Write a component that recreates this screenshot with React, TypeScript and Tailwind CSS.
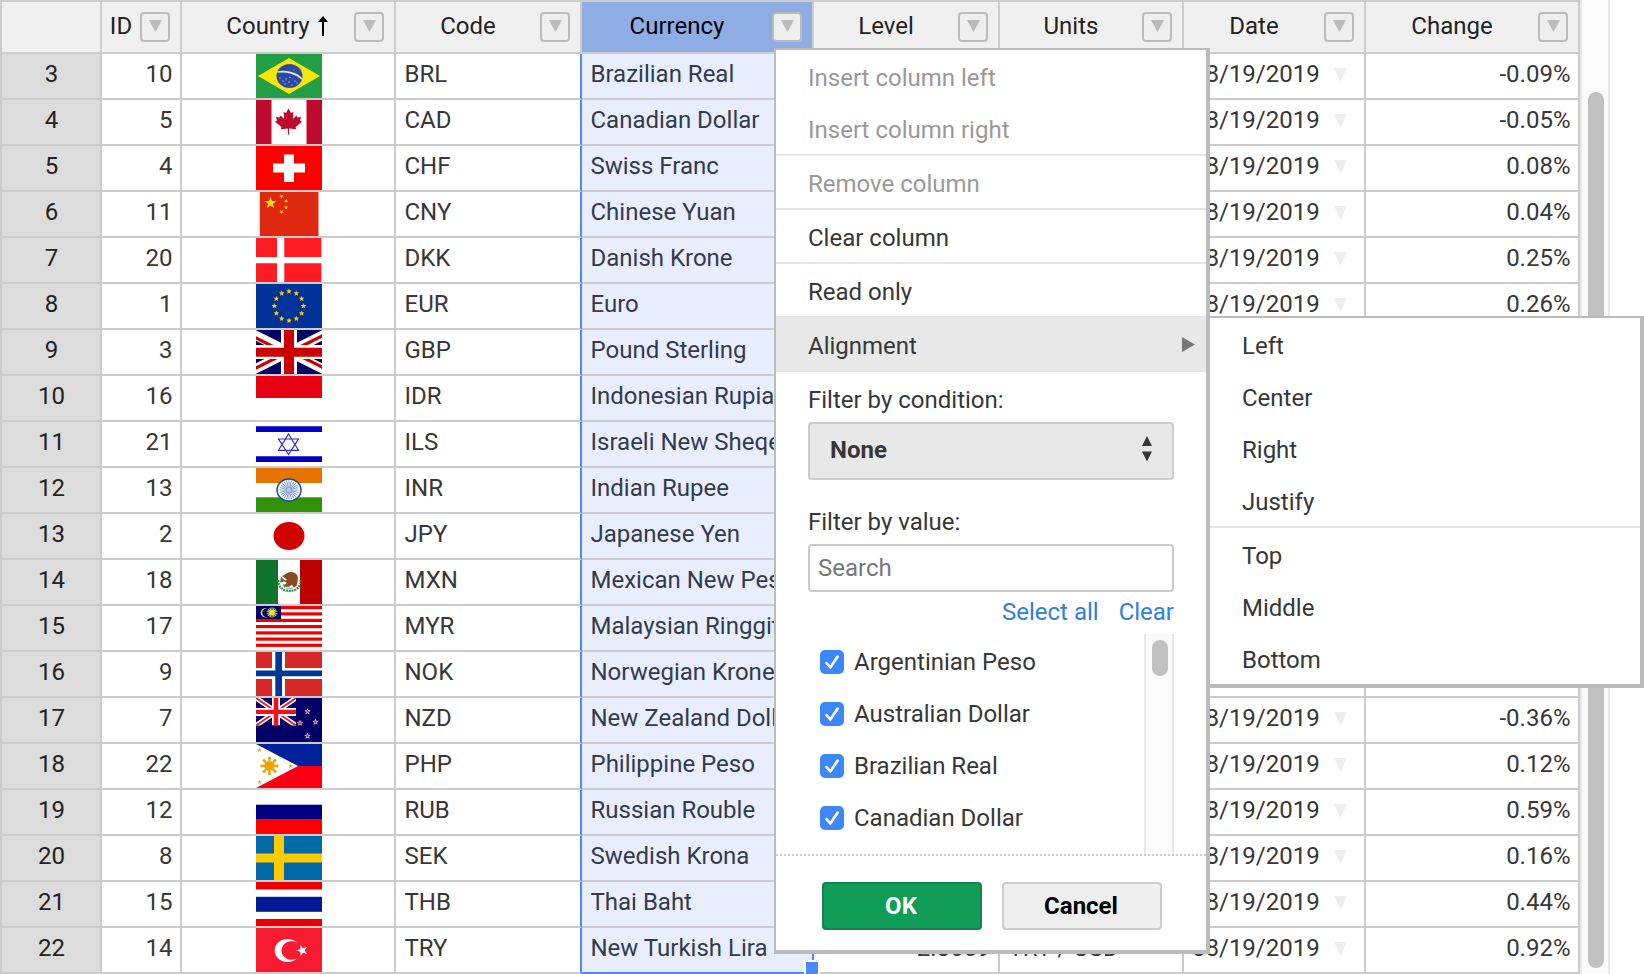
import React from "react";

type Row = { id: number; code: string; name: string; date?: string; change?: string; level?: string; units?: string };

const DATE = "08/19/2019";

const rows: Row[] = [
  { id: 10, code: "BRL", name: "Brazilian Real", date: DATE, change: "-0.09%" },
  { id: 5, code: "CAD", name: "Canadian Dollar", date: DATE, change: "-0.05%" },
  { id: 4, code: "CHF", name: "Swiss Franc", date: DATE, change: "0.08%" },
  { id: 11, code: "CNY", name: "Chinese Yuan", date: DATE, change: "0.04%" },
  { id: 20, code: "DKK", name: "Danish Krone", date: DATE, change: "0.25%" },
  { id: 1, code: "EUR", name: "Euro", date: DATE, change: "0.26%" },
  { id: 3, code: "GBP", name: "Pound Sterling" },
  { id: 16, code: "IDR", name: "Indonesian Rupiah" },
  { id: 21, code: "ILS", name: "Israeli New Sheqel" },
  { id: 13, code: "INR", name: "Indian Rupee" },
  { id: 2, code: "JPY", name: "Japanese Yen" },
  { id: 18, code: "MXN", name: "Mexican New Peso" },
  { id: 17, code: "MYR", name: "Malaysian Ringgit" },
  { id: 9, code: "NOK", name: "Norwegian Krone" },
  { id: 7, code: "NZD", name: "New Zealand Dollar", date: DATE, change: "-0.36%" },
  { id: 22, code: "PHP", name: "Philippine Peso", date: DATE, change: "0.12%" },
  { id: 12, code: "RUB", name: "Russian Rouble", date: DATE, change: "0.59%" },
  { id: 8, code: "SEK", name: "Swedish Krona", date: DATE, change: "0.16%" },
  { id: 15, code: "THB", name: "Thai Baht", date: DATE, change: "0.44%" },
  { id: 14, code: "TRY", name: "New Turkish Lira", date: DATE, change: "0.92%", level: "2.8659", units: "TRY / USD" },
];

const GRID = "grid grid-cols-[102px_80px_214px_186px_232px_186px_184px_182px_214px]";

function star(cx: number, cy: number, r: number, rot = -90, inner = 0.4): string {
  const pts: string[] = [];
  for (let i = 0; i < 10; i++) {
    const a = ((rot + i * 36) * Math.PI) / 180;
    const q = i % 2 ? r * inner : r;
    pts.push(`${(cx + q * Math.cos(a)).toFixed(2)},${(cy + q * Math.sin(a)).toFixed(2)}`);
  }
  return pts.join(" ");
}

function FlagArt({ code }: { code: string }) {
  switch (code) {
    case "BRL":
      return (
        <>
          <rect width="66" height="44" fill="#229e45" />
          <path d="M33 4 64 22 33 40 2 22Z" fill="#f8e509" />
          <ellipse cx="33.5" cy="22" rx="13" ry="12" fill="#2b49a3" />
          <path d="M21.5 18C30 16.500 40 19 46 25" fill="none" stroke="#dff0d8" strokeWidth="1.7" />
          <g fill="#a9b6dd">
            <circle cx="24" cy="24" r=".7" /><circle cx="27" cy="27" r=".7" /><circle cx="30" cy="25" r=".7" />
            <circle cx="33" cy="28" r=".8" /><circle cx="36" cy="31" r=".7" /><circle cx="39" cy="27" r=".7" />
            <circle cx="41" cy="29" r=".7" /><circle cx="34" cy="23.500" r=".7" /><circle cx="29" cy="30" r=".7" />
            <circle cx="38" cy="16" r=".5" />
          </g>
        </>
      );
    case "CAD":
      return (
        <>
          <rect width="66" height="44" fill="#fff" />
          <rect width="15.500" height="44" fill="#bf0a30" />
          <rect x="50.500" width="15.500" height="44" fill="#bf0a30" />
          <path
            d="M32.500 8.500 35 13 37.500 12 36.800 19 40.500 15.500 41.500 17.500 45 17 44 20.500 46 21.800 39.500 27 40.200 29.200 33 28.500 33.200 34.500H31.800L32 28.500 24.800 29.200 25.500 27 19 21.800 21 20.500 20 17 23.500 17.500 24.500 15.500 28.200 19 27.500 12 30 13Z"
            fill="#bf0a30"
          />
        </>
      );
    case "CHF":
      return (
        <>
          <rect width="66" height="44" fill="#fe0000" />
          <path d="M28 8.500h10v9h11v9H38v9.500H28v-9.500H17v-9h11Z" fill="#fff" />
        </>
      );
    case "CNY":
      return (
        <>
          <rect x="3.800" width="58.700" height="44" fill="#de2910" />
          <g fill="#ffde00">
            <polygon points={star(14.5, 11, 6.3)} />
            <polygon points={star(25.5, 4.3, 2.2, 30)} />
            <polygon points={star(30, 9, 2.2, 10)} />
            <polygon points={star(30, 15.5, 2.2, -90)} />
            <polygon points={star(25.5, 19.8, 2.2, 20)} />
          </g>
        </>
      );
    case "DKK":
      return (
        <>
          <rect width="65.300" height="44" fill="#ff1b22" />
          <path d="M21 0h7.300v44H21ZM0 19h66v6.300H0Z" fill="#fff" />
        </>
      );
    case "EUR":
      return (
        <>
          <rect width="66" height="44" fill="#039" />
          {Array.from({ length: 12 }, (_, i) => {
            const a = (i * Math.PI) / 6;
            return <polygon key={i} points={star(33 + 14.6 * Math.sin(a), 22 - 14.6 * Math.cos(a), 2.9, -90, 0.45)} fill="#fc0" />;
          })}
        </>
      );
    case "GBP":
      return (
        <>
          <rect width="66" height="44" fill="#006" />
          <path d="M-11 0 77 44M77 0-11 44" stroke="#fff" strokeWidth="9.500" />
          <path d="M-2 7 18 17M68 5 42 18M-2 39 26 25M68 38 40 24" stroke="#c00" strokeWidth="3.200" />
          <path d="M25 0h16v44H25ZM0 15h66v14H0Z" fill="#fff" />
          <path d="M28 0h10v44H28ZM0 17.700h66v9H0Z" fill="#c00" />
        </>
      );
    case "IDR":
      return (
        <>
          <rect width="66" height="44" fill="#fff" />
          <rect width="66" height="22" fill="#e70011" />
        </>
      );
    case "ILS":
      return (
        <>
          <rect width="66" height="44" fill="#fff" />
          <path d="M0 4.300h66V10H0ZM0 34.300h66V40H0Z" fill="#0000c8" />
          <path d="M32.500 12 42.500 28.300h-20ZM32.500 32.500 42.500 17h-20Z" fill="none" stroke="#2a2acc" strokeWidth="1.200" />
        </>
      );
    case "INR":
      return (
        <>
          <rect width="66" height="44" fill="#fff" />
          <rect width="66" height="15" fill="#e87400" />
          <rect y="29.300" width="66" height="14.700" fill="#319208" />
          <ellipse cx="33" cy="22" rx="12" ry="11" fill="#eef2fa" stroke="#1d4a9f" strokeWidth="1.500" />
          {Array.from({ length: 12 }, (_, i) => (
            <path key={i} d="M33 12.500V31.500" stroke="#7d9ad0" strokeWidth=".8" transform={`rotate(${i * 15} 33 22)`} />
          ))}
          <circle cx="33" cy="22" r="2" fill="#b7c8e6" />
        </>
      );
    case "JPY":
      return (
        <>
          <rect width="66" height="44" fill="#fff" />
          <ellipse cx="33" cy="22" rx="15.500" ry="14" fill="#d30000" />
        </>
      );
    case "MXN":
      return (
        <>
          <rect width="66" height="44" fill="#fff" />
          <rect width="22" height="44" fill="#0f7329" />
          <rect x="44" width="22" height="44" fill="#bd0000" />
          <path d="M22.500 20C22 27 27 31 33.500 31S45 27 44.500 20" fill="none" stroke="#3c8a4c" strokeWidth="2.200" strokeDasharray="2 .8" />
          <path d="M26 16c3-1 4-3 7-3.800 5-.7 9 2 9 6l-1 7-3 2.500-2-3-3 2-5-1 3-3-3-1 3-2Z" fill="#8b4a22" />
          <path d="M25 17l5 4-6 1.500ZM27 24l6 2-5 1.500Z" fill="#4c7b3c" />
          <path d="M29 27.500h9l-2 2h-5Z" fill="#7fc3d0" />
        </>
      );
    case "MYR":
      return (
        <>
          <rect width="66" height="44" fill="#fff" />
          {[0, 6.3, 12.8, 19, 25.3, 31.5, 37.7].map((y) => (
            <rect key={y} y={y} width="66" height="3.200" fill="#ed0000" />
          ))}
          <rect width="25" height="13" fill="#006" />
          <path d="M12 2.500a5 4.800 0 1 0 0 8.500 4.600 4.400 0 1 1 0-8.500Z" fill="#e8e23a" />
          <g stroke="#e8e23a" strokeWidth="1">
            {Array.from({ length: 7 }, (_, i) => (
              <path key={i} d="M16 1.300V11.700" transform={`rotate(${i * 25.7} 16 6.500)`} />
            ))}
          </g>
          <circle cx="16" cy="6.500" r="2.600" fill="#e8e23a" />
        </>
      );
    case "NOK":
      return (
        <>
          <rect width="66" height="44" fill="#d72828" />
          <path d="M16 0h13v44H16ZM0 16h66v11H0Z" fill="#fff" />
          <path d="M19.300 0H26v44h-6.700ZM0 18.500h66v5.800H0Z" fill="#003897" />
        </>
      );
    case "NZD":
      return (
        <>
          <rect width="66" height="44" fill="#006" />
          <svg width="40" height="27.500" viewBox="0 0 40 27.500">
            <path d="M0 0 40 27.500M40 0 0 27.500" stroke="#fff" strokeWidth="5" />
            <path d="M0 0 40 27.500M40 0 0 27.500" stroke="#f01020" strokeWidth="1.800" />
            <path d="M16 0h8v27.500h-8ZM0 10h40v8H0Z" fill="#fff" />
            <path d="M17.700 0h4.600v27.500h-4.600ZM0 11.700h40v4.300H0Z" fill="#f01020" />
          </svg>
          {[[51.5, 13.5], [44, 25], [59.5, 24], [51.5, 38]].map(([x, y]) => (
            <g key={`${x}-${y}`}>
              <polygon points={star(x, y, 3.3, -90, 0.45)} fill="#fff" />
              <polygon points={star(x, y, 2.1, -90, 0.5)} fill="#e01838" />
            </g>
          ))}
        </>
      );
    case "PHP":
      return (
        <>
          <rect width="66" height="22" fill="#00209c" />
          <rect y="22" width="66" height="22" fill="#fb0013" />
          <path d="M0 0 42 22 0 44Z" fill="#fff" />
          <g fill="#eda300">
            <ellipse cx="13.500" cy="22" rx="5.300" ry="4.800" />
            {Array.from({ length: 8 }, (_, i) => (
              <path key={i} d="M12.700 18 12 13.300 13.500 12.800 15 13.300 14.300 18Z" transform={`rotate(${i * 45} 13.500 22)`} />
            ))}
            <polygon points={star(3.5, 6, 2.5)} />
            <polygon points={star(3.5, 38, 2.5)} />
            <polygon points={star(34.5, 22, 2.5)} />
          </g>
        </>
      );
    case "RUB":
      return (
        <>
          <rect width="66" height="44" fill="#fff" />
          <rect y="14.700" width="66" height="14.700" fill="#000080" />
          <rect y="29" width="66" height="15" fill="#fe0000" />
        </>
      );
    case "SEK":
      return (
        <>
          <rect width="66" height="44" fill="#0069a7" />
          <path d="M18 0h10v44H18ZM0 17.600h66v9H0Z" fill="#fecb00" />
        </>
      );
    case "THB":
      return (
        <>
          <rect width="66" height="44" fill="#fff" />
          <path d="M0 0h66v7.500H0ZM0 37h66v7H0Z" fill="#ea0000" />
          <rect y="14.800" width="66" height="15" fill="#001a93" />
        </>
      );
    default:
      return (
        <>
          <rect width="66" height="44" fill="#f71a31" />
          <path d="M41 14.500a13 11.500 0 1 0 0 16 10.300 9.300 0 1 1 0-16Z" fill="#fff" />
          <polygon points={star(46.3, 22.5, 6, 180, 0.38)} fill="#fff" />
        </>
      );
  }
}

function Flag({ code }: { code: string }) {
  return (
    <svg width="66" height="44" viewBox="0 0 66 44" className="ml-[74px] block overflow-hidden">
      <FlagArt code={code} />
    </svg>
  );
}

function FilterButton() {
  return (
    <span className="mr-2.5 flex h-[30px] w-[30px] shrink-0 justify-center rounded-[4px] border-2 border-[#bbb] bg-[#eee] pt-1.5">
      <svg width="13" height="12" viewBox="0 0 13 12" className="ml-px">
        <path d="M0 0h13L6.500 12Z" fill="#bbb" />
      </svg>
    </span>
  );
}

function Head({ title, sorted, selected }: { title: string; sorted?: boolean; selected?: boolean }) {
  return (
    <div className={`flex items-center border-r-2 border-b-2 border-[#ccc] ${selected ? "bg-[#8eade5] text-black" : "bg-[#f0f0f0] text-[#222]"}`}>
      <span className="flex flex-1 justify-center pb-0.5 leading-[30px]">
        <span className="relative">
          {title}
          {sorted && (
            <svg width="10" height="20" viewBox="0 0 10 20" className="absolute top-[5px] left-[92px]">
              <path d="M5 0 10 6H6V20H4V6H0Z" fill="#000" />
            </svg>
          )}
        </span>
      </span>
      <FilterButton />
    </div>
  );
}

const CELL = "border-r-2 border-b-2 border-[#ccc] leading-[40px] whitespace-nowrap overflow-hidden";

function SheetRow({ row, index }: { row: Row; index: number }) {
  const last = index === rows.length - 1;
  return (
    <div className={`${GRID} h-[46px]`}>
      <div className={`${CELL} border-l-2 bg-[#dcdcdc] pl-px text-center text-[#222]`}>{index + 3}</div>
      <div className={`${CELL} pr-[7.5px] text-right`}>{row.id}</div>
      <div className={CELL}>
        <Flag code={row.code} />
      </div>
      <div className={`${CELL} border-r-[#4b89ff] pl-[8.5px]`}>{row.code}</div>
      <div className={`${CELL} border-r-[#4b89ff] bg-[#e8eefe] pl-[8.5px] text-[#333a4d] ${last ? "border-b-[#4b89ff]" : ""}`}>{row.name}</div>
      <div className={`${CELL} pr-[7.5px] text-right`}>{row.level}</div>
      <div className={`${CELL} pl-[8.5px]`}>{row.units}</div>
      <div className={`${CELL} flex justify-between pr-[17px] pl-2`}>
        {row.date && (
          <>
            {row.date}
            <svg width="13" height="14" viewBox="0 0 13 14" className="mt-[14px]">
              <path d="M0 0h13L6.500 14Z" fill="#eee" />
            </svg>
          </>
        )}
      </div>
      <div className={`${CELL} pr-[7.5px] text-right`}>{row.change}</div>
    </div>
  );
}

function MenuItem({ label, disabled }: { label: string; disabled?: boolean }) {
  return <div className={`h-[52px] px-8 leading-[56px] ${disabled ? "text-[#999]" : ""}`}>{label}</div>;
}

const Separator = () => <div className="h-0.5 bg-[#e6e6e6]" />;

function CheckItem({ label }: { label: string }) {
  return (
    <div className="flex h-[52px] items-center gap-2.5">
      <svg width="24" height="24" viewBox="0 0 24 24">
        <rect width="24" height="24" rx="5" fill="#3b88fd" />
        <path d="M6.500 13.200 10.300 17.500 17.700 6.500" fill="none" stroke="#fff" strokeWidth="2.600" strokeLinecap="round" strokeLinejoin="round" />
      </svg>
      <span className="leading-[52px]">{label}</span>
    </div>
  );
}

function ColumnMenu() {
  return (
    <div className="absolute top-12 left-[774px] h-[906px] w-[436px] border-2 border-r-4 border-b-4 border-[#bbb] bg-white">
      <MenuItem label="Insert column left" disabled />
      <MenuItem label="Insert column right" disabled />
      <Separator />
      <MenuItem label="Remove column" disabled />
      <Separator />
      <MenuItem label="Clear column" />
      <Separator />
      <MenuItem label="Read only" />
      <Separator />
      <div className="flex h-[52px] justify-between bg-[#e8e8e8] pr-[11px] pl-8 leading-[56px]">
        Alignment
        <svg width="13" height="15" viewBox="0 0 13 15" className="mt-[19px]">
          <path d="M0 0 13 7.500 0 15Z" fill="#777" />
        </svg>
      </div>
      <Separator />
      <div className="px-8">
        <div className="h-[50px] leading-[56px]">Filter by condition:</div>
        <div className="flex h-[58px] items-center justify-between rounded-[4px] border-2 border-[#ccc] bg-[#e8e8e8] px-5 font-bold">
          <span className="pb-0.5">None</span>
          <svg width="10" height="26" viewBox="0 0 10 26" className="-mt-1">
            <path d="M5 0 10 10H0ZM0 15.500H10L5 25.500Z" fill="#373737" />
          </svg>
        </div>
        <div className="h-16 pt-[15px] leading-[54px]">Filter by value:</div>
        <div className="flex h-12 items-center rounded-[4px] border-2 border-[#ccc] pl-2 text-[#777]">Search</div>
        <div className="flex h-[42px] justify-end gap-5 leading-[40px] text-[#2f80d9]">
          <span>Select all</span>
          <span>Clear</span>
        </div>
        <div className="flex h-[220px] justify-between overflow-hidden pl-3">
          <div className="pt-0.5">
            <CheckItem label="Argentinian Peso" />
            <CheckItem label="Australian Dollar" />
            <CheckItem label="Brazilian Real" />
            <CheckItem label="Canadian Dollar" />
          </div>
          <div className="w-[30px] border-x-2 border-[#e8e8e8] bg-[#fafafa] pt-1.5 pl-1.5">
            <div className="h-9 w-4 rounded-full bg-[#c1c1c1]" />
          </div>
        </div>
      </div>
      <div className="h-0.5 bg-[repeating-linear-gradient(90deg,#ccc_0_2px,transparent_2px_4px)]" />
      <div className="flex gap-5 pt-[26px] pl-[46px] font-bold">
        <div className="h-12 w-40 rounded-[4px] border-2 border-[#18804e] bg-[#0f9d58] pr-0.5 text-center leading-[44px] text-white">OK</div>
        <div className="h-12 w-40 rounded-[4px] border-2 border-[#ccc] bg-[#eee] pr-0.5 text-center leading-[44px] text-black">Cancel</div>
      </div>
    </div>
  );
}

function AlignmentMenu() {
  return (
    <div className="absolute top-[316px] left-[1210px] h-[372px] w-[434px] border-t-2 border-r-4 border-b-4 border-[#bbb] bg-white">
      <MenuItem label="Left" />
      <MenuItem label="Center" />
      <MenuItem label="Right" />
      <MenuItem label="Justify" />
      <Separator />
      <MenuItem label="Top" />
      <MenuItem label="Middle" />
      <MenuItem label="Bottom" />
    </div>
  );
}

export default function App() {
  return (
    <div className="relative flex h-[974px] w-[1644px] overflow-hidden bg-white font-[Roboto,sans-serif] text-[24px] text-[#373737]">
      <div className="w-[1580px]">
        <div className={`${GRID} h-[54px] border-t-2 border-[#ccc]`}>
          <div className="border-r-2 border-b-2 border-l-2 border-[#ccc] bg-[#f0f0f0]" />
          <Head title="ID" />
          <Head title="Country" sorted />
          <Head title="Code" />
          <Head title="Currency" selected />
          <Head title="Level" />
          <Head title="Units" />
          <Head title="Date" />
          <Head title="Change" />
        </div>
        {rows.map((row, i) => (
          <SheetRow key={row.code} row={row} index={i} />
        ))}
      </div>
      <div className="w-[30px] border-x-2 border-[#e8e8e8] bg-[#fafafa] pt-[92px] pl-1.5">
        <div className="h-[876px] w-4 rounded-full bg-[#c1c1c1]" />
      </div>
      <div className="absolute top-[960px] left-[804px] h-3.5 w-4 border-2 border-b-0 border-white bg-[#4b89ff]" />
      <ColumnMenu />
      <AlignmentMenu />
    </div>
  );
}
